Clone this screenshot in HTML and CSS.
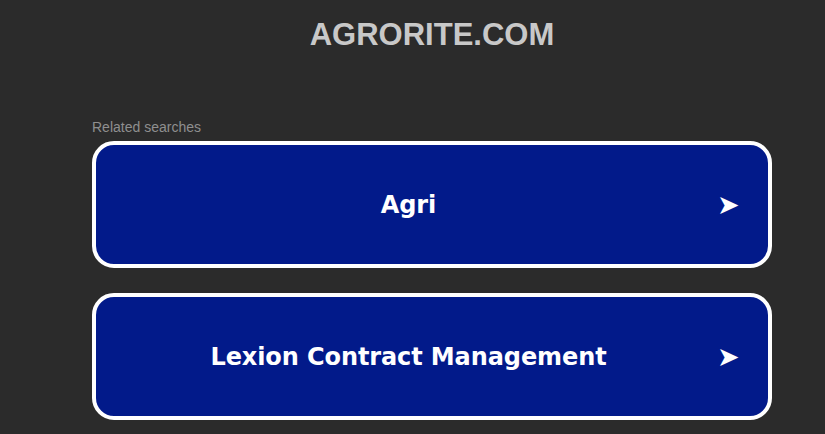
FILE: index.html
```html
<!DOCTYPE html>
<html>
<head>
<meta charset="utf-8">
<link rel="stylesheet" href="styles.css">
</head>
<body>
<div class="wrap">
  <h1 class="title">AGRORITE.COM</h1>
  <div class="related">Related searches</div>
  <a class="card" href="#"><span class="label">Agri</span><span class="arrow">➤</span></a>
  <a class="card" href="#"><span class="label">Lexion Contract Management</span><span class="arrow">➤</span></a>
</div>
</body>
</html>
```
FILE: styles.css
```css
html, body {
  margin: 0;
  padding: 0;
  background: #2b2b2b;
  height: 100%;
  overflow: hidden;
}
.wrap {
  margin-left: 92px;
  width: 680px;
  display: flex;
  flex-direction: column;
}
.title {
  margin: 0;
  padding-top: 18px;
  font-family: "Liberation Sans", Arial, sans-serif;
  font-weight: bold;
  font-size: 31px;
  line-height: 34px;
  color: #c8c8c8;
  text-align: center;
}
.related {
  margin-top: 67px;
  font-family: "Liberation Sans", Arial, sans-serif;
  font-size: 14px;
  line-height: 16px;
  color: #8f8f8f;
}
.card {
  margin-top: 6px;
  margin-bottom: 25px;
  box-sizing: border-box;
  height: 127px;
  border: 4px solid #ffffff;
  border-radius: 22px;
  background: #021a8a;
  display: flex;
  align-items: center;
  text-decoration: none;
  color: #fff;
  padding: 0 27px 0 0;
}
.card + .card { margin-top: 0; }
.label {
  flex: 1;
  text-align: center;
  font-family: "DejaVu Sans", Verdana, sans-serif;
  font-weight: bold;
  font-size: 24px;
  letter-spacing: -0.1px;
  padding-left: 4px;
}
.arrow {
  font-family: "DejaVu Sans", sans-serif;
  font-size: 27px;
  width: 24px;
  color: #fff;
}
```
